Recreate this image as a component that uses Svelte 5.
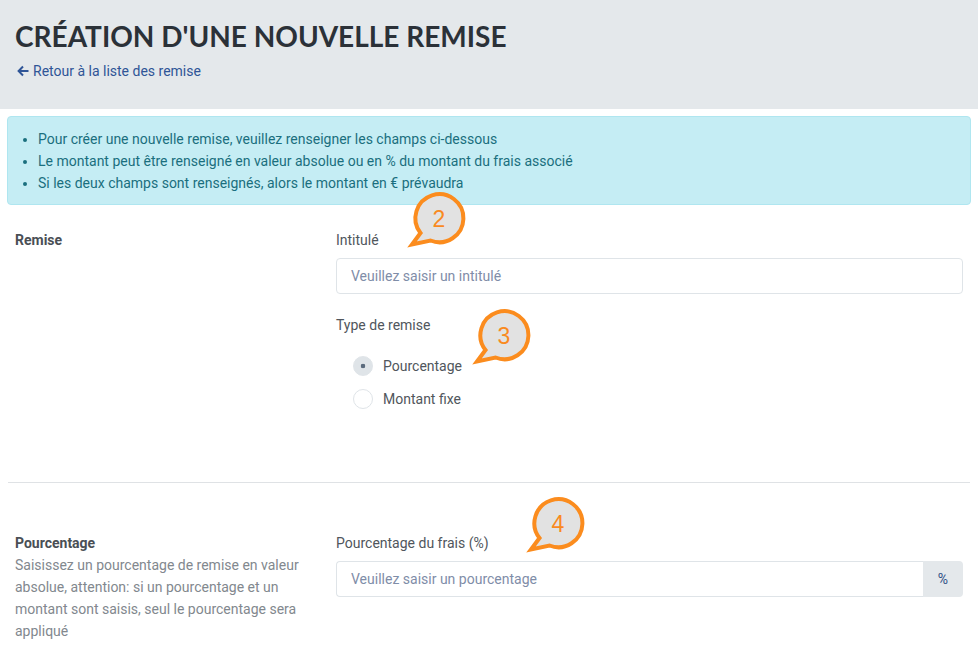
<script>
  let remiseType = "pourcentage";

  const notes = [
    "Pour créer une nouvelle remise, veuillez renseigner les champs ci-dessous",
    "Le montant peut être renseigné en valeur absolue ou en % du montant du frais associé",
    "Si les deux champs sont renseignés, alors le montant en € prévaudra"
  ];

  const bubbles = [
    { n: 2, left: 403, top: 189 },
    { n: 3, left: 468, top: 306 },
    { n: 4, left: 522, top: 494 }
  ];
</script>

<div class="page">
  <header class="head">
    <h1>CRÉATION D'UNE NOUVELLE REMISE</h1>
    <a href="#retour" class="back">
      <svg width="12" height="12" viewBox="0 0 12 12" aria-hidden="true">
        <path d="M6 1.5 1.6 6 6 10.5M2 6h9.5" fill="none" stroke="currentColor" stroke-width="2" />
      </svg>
      Retour à la liste des remise
    </a>
  </header>

  <div class="alert">
    <ul>
      {#each notes as note}
        <li>{note}</li>
      {/each}
    </ul>
  </div>

  <section class="row first">
    <div class="side"><strong>Remise</strong></div>
    <div class="fields">
      <label class="lbl" for="intitule">Intitulé</label>
      <input id="intitule" class="ctl" placeholder="Veuillez saisir un intitulé" />
      <div class="type">Type de remise</div>
      <div class="radios">
        <label class="radio">
          <input type="radio" bind:group={remiseType} value="pourcentage" />
          <span class="dot"></span>
          Pourcentage
        </label>
        <label class="radio">
          <input type="radio" bind:group={remiseType} value="fixe" />
          <span class="dot"></span>
          Montant fixe
        </label>
      </div>
    </div>
  </section>

  <hr />

  <section class="row second">
    <div class="side">
      <strong>Pourcentage</strong>
      <p>Saisissez un pourcentage de remise en valeur absolue, attention: si un pourcentage et un montant sont saisis, seul le pourcentage sera appliqué</p>
    </div>
    <div class="fields">
      <label class="lbl" for="pct">Pourcentage du frais (%)</label>
      <div class="group">
        <input id="pct" class="ctl" placeholder="Veuillez saisir un pourcentage" />
        <span class="addon">%</span>
      </div>
    </div>
  </section>

  {#each bubbles as b}
    <div class="bubble" style="left: {b.left}px; top: {b.top}px">
      <svg width="64" height="64" viewBox="0 0 64 64" aria-hidden="true">
        <path d="M17.5 44 9 55.5 27.5 51.5A24 24 0 1 0 17.5 44Z" fill="#e2e2e2" stroke="#fb8c1e" stroke-width="4" stroke-miterlimit="12" />
      </svg>
      <span>{b.n}</span>
    </div>
  {/each}
</div>

<style>
  :global(body) {
    margin: 0;
    background: #fff;
    overflow: hidden;
  }

  .page {
    position: relative;
    height: 649px;
    overflow: hidden;
    font-family: Roboto, "Liberation Sans", sans-serif;
    font-size: 14px;
    line-height: 22px;
    color: #50565c;
  }

  .head {
    height: 109px;
    box-sizing: border-box;
    padding: 18px 15px 0;
    background: #e4e8eb;
  }

  h1 {
    margin: 0;
    font-family: Lato, sans-serif;
    font-size: 28px;
    line-height: 36px;
    font-weight: 700;
    color: #2b3138;
  }

  .back {
    display: flex;
    align-items: center;
    gap: 4px;
    margin-top: 6px;
    margin-left: 2px;
    color: #2f5597;
    text-decoration: none;
  }

  .alert {
    margin: 7px 7px 0;
    height: 89px;
    box-sizing: border-box;
    padding: 11px 0 0 30px;
    background: #c5edf4;
    border: 1px solid #afe6f0;
    border-radius: 4px;
    color: #1a6f7e;
  }

  ul {
    margin: 0;
    padding: 0;
  }

  .row {
    display: flex;
    padding: 0 15px;
  }

  .first {
    height: 277px;
    box-sizing: border-box;
    padding-top: 24px;
  }

  .second {
    padding-top: 49px;
  }

  .side {
    width: 321px;
    flex: none;
    box-sizing: border-box;
    padding-right: 18px;
  }

  .side strong {
    display: block;
    font-weight: 700;
    color: #4a4f55;
  }

  .side p {
    margin: 0;
    color: #82888e;
  }

  .fields {
    width: 627px;
    flex: none;
  }

  .lbl {
    display: block;
    margin-bottom: 7px;
  }

  .ctl {
    display: block;
    width: 100%;
    height: 36px;
    box-sizing: border-box;
    padding: 0 14px;
    background: #fff;
    border: 1px solid #dfe4e8;
    border-radius: 4px;
    outline: none;
    font: inherit;
    color: #495057;
  }

  .ctl::placeholder {
    color: #7f8da8;
    opacity: 1;
  }

  .type {
    margin-top: 20px;
    margin-bottom: 20px;
  }

  .radios {
    display: flex;
    flex-direction: column;
    gap: 13px;
    padding-left: 17px;
  }

  .radio {
    display: flex;
    align-items: center;
    gap: 10px;
    height: 20px;
  }

  .radio input {
    position: absolute;
    opacity: 0;
    width: 0;
    height: 0;
  }

  .dot {
    width: 20px;
    height: 20px;
    box-sizing: border-box;
    border: 1px solid #dfe4e8;
    border-radius: 50%;
    background: #fff;
  }

  .radio input:checked + .dot {
    background: radial-gradient(circle, #5b6b7d 0 2px, #dfe4e8 2.6px);
  }

  .group {
    display: flex;
  }

  .group .ctl {
    flex: 1;
    min-width: 0;
    border-radius: 4px 0 0 4px;
    border-right: 0;
  }

  .addon {
    width: 40px;
    height: 36px;
    box-sizing: border-box;
    display: flex;
    align-items: center;
    justify-content: center;
    background: #e4e8eb;
    border-radius: 0 4px 4px 0;
    color: #2f4f85;
  }

  hr {
    margin: 0 8px;
    border: 0;
    border-top: 1px solid #dfe2e5;
  }

  .bubble {
    position: absolute;
    width: 64px;
    height: 64px;
    pointer-events: none;
  }

  .bubble svg {
    display: block;
  }

  .bubble span {
    position: absolute;
    left: 22px;
    top: 16px;
    width: 28px;
    text-align: center;
    font-family: "Liberation Sans", sans-serif;
    font-size: 23px;
    line-height: 28px;
    color: #f98a1f;
  }
</style>
